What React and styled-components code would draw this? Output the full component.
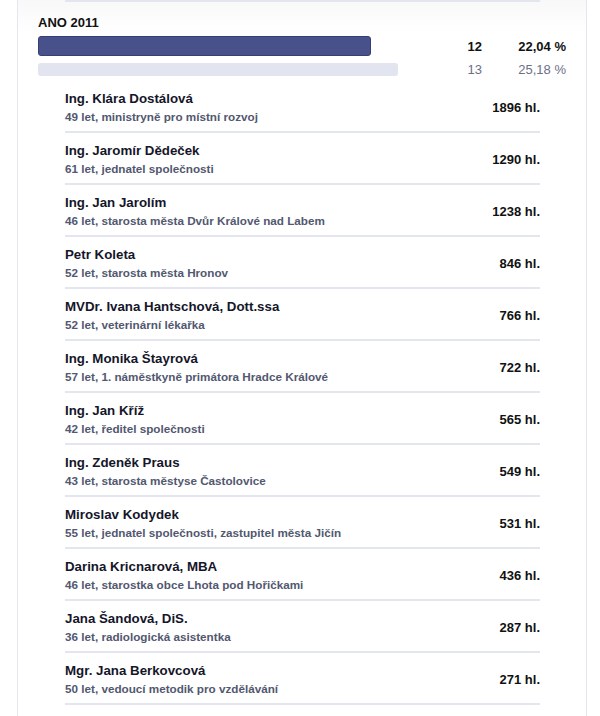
import styled, { createGlobalStyle } from "styled-components";

const GlobalStyle = createGlobalStyle`
  body {
    margin: 0;
    background: #fff;
    font-family: "Liberation Sans", Arial, sans-serif;
    color: #16172a;
  }
`;

const Card = styled.section`
  margin-left: 17px;
  width: 528px;
  min-height: 716px;
  padding: 0 20px;
  border-left: 1px solid #e3e5ef;
  border-right: 1px solid #e3e5ef;
  background: linear-gradient(#f8f8f9, #fff 32px);
`;

const TopRule = styled.div`
  margin: 0 26px 0 27px;
  height: 2px;
  background: #e4e6ef;
`;

const Party = styled.h2`
  margin: 13px 0 0;
  font-size: 13px;
  line-height: 16px;
  font-weight: bold;
  color: #111;
`;

const Results = styled.div`
  display: grid;
  grid-template-columns: 1fr 40px 84px;
  row-gap: 7px;
  align-items: center;
  margin-top: 5px;
`;

const Track = styled.div`
  height: ${(p) => (p.$main ? "20px" : "13px")};
`;

const Bar = styled.div`
  height: 100%;
  box-sizing: border-box;
  border-radius: 3px;
  background: ${(p) => (p.$main ? "#485189" : "#e2e5ef")};
  border: ${(p) => (p.$main ? "1px solid #363e76" : "none")};
`;

const Value = styled.div`
  text-align: right;
  font-size: 13px;
  line-height: 13px;
  font-weight: ${(p) => (p.$main ? "bold" : "normal")};
  color: ${(p) => (p.$main ? "#111" : "#6c7086")};
`;

const List = styled.ul`
  list-style: none;
  margin: 5px 26px 0 27px;
  padding: 0;
`;

const Row = styled.li`
  display: flex;
  align-items: center;
  justify-content: space-between;
  height: 52px;
  box-sizing: border-box;
  padding-top: 2px;
  border-bottom: 2px solid #e4e6ef;
`;

const Person = styled.div`
  display: flex;
  flex-direction: column;
  gap: 1.5px;
`;

const Name = styled.div`
  font-size: 13.3px;
  line-height: 17px;
  font-weight: bold;
  color: #15162a;
`;

const Info = styled.div`
  font-size: 11.7px;
  line-height: 15px;
  font-weight: bold;
  color: #525870;
`;

const Votes = styled.div`
  font-size: 13px;
  font-weight: bold;
  color: #111;
`;

const results = [
  { main: true, width: 333, seats: "12", pct: "22,04 %" },
  { main: false, width: 360, seats: "13", pct: "25,18 %" },
];

const candidates = [
  ["Ing. Klára Dostálová", "49 let, ministryně pro místní rozvoj", "1896"],
  ["Ing. Jaromír Dědeček", "61 let, jednatel společnosti", "1290"],
  ["Ing. Jan Jarolím", "46 let, starosta města Dvůr Králové nad Labem", "1238"],
  ["Petr Koleta", "52 let, starosta města Hronov", "846"],
  ["MVDr. Ivana Hantschová, Dott.ssa", "52 let, veterinární lékařka", "766"],
  ["Ing. Monika Štayrová", "57 let, 1. náměstkyně primátora Hradce Králové", "722"],
  ["Ing. Jan Kříž", "42 let, ředitel společnosti", "565"],
  ["Ing. Zdeněk Praus", "43 let, starosta městyse Častolovice", "549"],
  ["Miroslav Kodydek", "55 let, jednatel společnosti, zastupitel města Jičín", "531"],
  ["Darina Kricnarová, MBA", "46 let, starostka obce Lhota pod Hořičkami", "436"],
  ["Jana Šandová, DiS.", "36 let, radiologická asistentka", "287"],
  ["Mgr. Jana Berkovcová", "50 let, vedoucí metodik pro vzdělávání", "271"],
];

export default function App() {
  return (
    <>
      <GlobalStyle />
      <Card>
        <TopRule />
        <Party>ANO 2011</Party>
        <Results>
          {results.flatMap((r) => [
            <Track $main={r.main} key={r.seats + "-bar"}>
              <Bar $main={r.main} style={{ width: r.width }} />
            </Track>,
            <Value $main={r.main} key={r.seats + "-seats"}>
              {r.seats}
            </Value>,
            <Value $main={r.main} key={r.seats + "-pct"}>
              {r.pct}
            </Value>,
          ])}
        </Results>
        <List>
          {candidates.map(([name, info, votes]) => (
            <Row key={name}>
              <Person>
                <Name>{name}</Name>
                <Info>{info}</Info>
              </Person>
              <Votes>{votes} hl.</Votes>
            </Row>
          ))}
        </List>
      </Card>
    </>
  );
}
